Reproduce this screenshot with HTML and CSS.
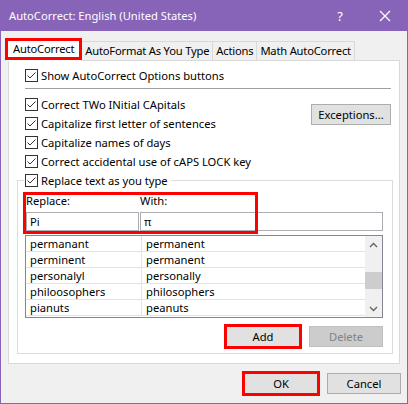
FILE: index.html
```html
<!DOCTYPE html>
<html lang="en">
<head>
    <meta charset="UTF-8">
    <title>AutoCorrect: English (United States)</title>
    <link rel="stylesheet" href="styles.css">
</head>
<body>
    <div class="window">
        <div class="titlebar">
            <span class="title">AutoCorrect: English (United States)</span>
            <span class="help">?</span>
            <span class="close">
                <svg width="12" height="12" viewBox="0 0 12 12"><path d="M1 1 L11 11 M11 1 L1 11" stroke="#fff" stroke-width="1.2" fill="none"/></svg>
            </span>
        </div>

        <div class="tabs">
            <div class="tab active">AutoCorrect<span class="mark"></span></div>
            <div class="tab">AutoFormat As You Type</div>
            <div class="tab">Actions</div>
            <div class="tab">Math AutoCorrect</div>
        </div>

        <div class="panel">
            <div class="check"><span class="box"><svg width="11" height="11" viewBox="0 0 11 11"><path d="M1.5 5.5 L4 8 L9.5 2.5" stroke="#333" stroke-width="1" fill="none"/></svg></span>Show AutoCorrect Options buttons</div>
            <div class="sep"></div>

            <div class="options">
                <div class="checks">
                    <div class="check"><span class="box"><svg width="11" height="11" viewBox="0 0 11 11"><path d="M1.5 5.5 L4 8 L9.5 2.5" stroke="#333" stroke-width="1" fill="none"/></svg></span>Correct TWo INitial CApitals</div>
                    <div class="check"><span class="box"><svg width="11" height="11" viewBox="0 0 11 11"><path d="M1.5 5.5 L4 8 L9.5 2.5" stroke="#333" stroke-width="1" fill="none"/></svg></span>Capitalize first letter of sentences</div>
                    <div class="check"><span class="box"><svg width="11" height="11" viewBox="0 0 11 11"><path d="M1.5 5.5 L4 8 L9.5 2.5" stroke="#333" stroke-width="1" fill="none"/></svg></span>Capitalize names of days</div>
                    <div class="check"><span class="box"><svg width="11" height="11" viewBox="0 0 11 11"><path d="M1.5 5.5 L4 8 L9.5 2.5" stroke="#333" stroke-width="1" fill="none"/></svg></span>Correct accidental use of cAPS LOCK key</div>
                </div>
                <button class="btn exceptions">Exceptions...</button>
            </div>

            <fieldset class="group">
                <legend><div class="check"><span class="box"><svg width="11" height="11" viewBox="0 0 11 11"><path d="M1.5 5.5 L4 8 L9.5 2.5" stroke="#333" stroke-width="1" fill="none"/></svg></span>Replace text as you type</div></legend>

                <div class="entry">
                    <div class="field replace">
                        <span class="label">Replace:</span>
                        <div class="input">Pi</div>
                    </div>
                    <div class="field with">
                        <span class="label">With:</span>
                        <div class="input">π</div>
                    </div>
                    <span class="mark"></span>
                </div>

                <div class="list">
                    <div class="rows">
                        <div class="row"><span>permanant</span><span>permanent</span></div>
                        <div class="row"><span>perminent</span><span>permanent</span></div>
                        <div class="row"><span>personalyl</span><span>personally</span></div>
                        <div class="row"><span>philoosophers</span><span>philosophers</span></div>
                        <div class="row"><span>pianuts</span><span>peanuts</span></div>
                    </div>
                    <div class="scrollbar">
                        <span class="arrow"><svg width="9" height="6" viewBox="0 0 9 6"><path d="M1 5 L4.5 1.5 L8 5" stroke="#606060" stroke-width="1.3" fill="none"/></svg></span>
                        <div class="track"><div class="thumb"></div></div>
                        <span class="arrow"><svg width="9" height="6" viewBox="0 0 9 6"><path d="M1 1 L4.5 4.5 L8 1" stroke="#606060" stroke-width="1.3" fill="none"/></svg></span>
                    </div>
                </div>

                <div class="list-actions">
                    <button class="btn focused marked">Add</button>
                    <button class="btn" disabled>Delete</button>
                </div>
            </fieldset>
        </div>

        <div class="footer">
            <button class="btn marked">OK</button>
            <button class="btn">Cancel</button>
        </div>
    </div>
</body>
</html>
```

FILE: styles.css
```css
* {
    box-sizing: border-box;
}
body {
    margin: 0;
    font-family: "Noto Sans", "Open Sans", sans-serif;
    font-size: 11.2px;
    color: #000;
    background: #fff;
}
.window {
    width: 408px;
    height: 404px;
    background: #f0f0f0;
    border: 1px solid #8764b8;
    border-top: 0;
    display: flex;
    flex-direction: column;
}

/* title bar */
.titlebar {
    height: 31px;
    margin: 0 -1px;
    padding-left: 9px;
    background: #8764b8;
    color: #fff;
    display: flex;
    align-items: center;
}
.title {
    flex: 1;
    font-size: 11.2px;
}
.help {
    width: 44px;
    text-align: center;
    font-size: 13px;
}
.close {
    width: 46px;
    display: flex;
    justify-content: center;
}

/* tabs */
.tabs {
    display: flex;
    align-items: flex-end;
    height: 21px;
    margin: 8px 0 0 5px;
    letter-spacing: -0.2px;
}
.tab {
    position: relative;
    height: 19px;
    padding: 0 3px;
    margin-left: -1px;
    border: 1px solid #d9d9d9;
    border-bottom: 0;
    background: #f0f0f0;
    line-height: 17px;
    white-space: nowrap;
}
.tab.active {
    z-index: 1;
    height: 22px;
    margin-bottom: -1px;
    padding: 0 7px;
    background: #fff;
    line-height: 18px;
}
.mark {
    position: absolute;
    border: 3px solid #f00;
    pointer-events: none;
}
.tab .mark {
    top: -2px;
    left: -1px;
    right: -1px;
    height: 22px;
}

/* panel */
.panel {
    height: 304px;
    margin: 0 7px;
    padding: 5px 8px 0 16px;
    background: #fff;
    border: 1px solid #d9d9d9;
}
.check {
    height: 19px;
    display: flex;
    align-items: center;
    gap: 3px;
    white-space: nowrap;
}
.box {
    width: 13px;
    height: 13px;
    border: 1px solid #333;
    background: #fff;
    display: flex;
    align-items: center;
    justify-content: center;
}
.sep {
    height: 1px;
    margin: 3px 0 6px;
    background: #a0a0a0;
}
.options {
    display: flex;
    justify-content: space-between;
    align-items: flex-start;
}

/* buttons */
.btn {
    width: 74px;
    height: 21px;
    padding: 0;
    font-family: inherit;
    font-size: 11.2px;
    color: #000;
    background: #e1e1e1;
    border: 1px solid #adadad;
}
.btn:disabled {
    color: #838383;
    background: #cccccc;
    border-color: #bfbfbf;
}
.btn.focused {
    border-color: #0078d7;
}
.btn.marked {
    outline: 3px solid #f00;
    outline-offset: -1px;
}
.exceptions {
    width: 80px;
    margin-top: 9px;
}

/* replace group */
.group {
    margin: 0 -2px 0 -8px;
    padding: 3px 9px 6px 8px;
    min-width: 0;
    border: 1px solid #dcdcdc;
}
.group legend {
    margin-left: -2px;
    padding: 0 3px 0 1px;
}
.entry {
    position: relative;
    display: flex;
    gap: 1px;
}
.field {
    display: flex;
    flex-direction: column;
    gap: 3px;
}
.field.replace {
    width: 113px;
}
.field.with {
    flex: 1;
}
.label {
    height: 16px;
    line-height: 16px;
}
.input {
    height: 19px;
    padding-left: 3px;
    line-height: 17px;
    border: 1px solid #abadb3;
}
.entry .mark {
    top: -1px;
    left: -3px;
    width: 235px;
    height: 42px;
}

/* replacement list */
.list {
    display: flex;
    height: 83px;
    margin: 4px 0 0 -1px;
    border: 1px solid #828790;
}
.rows {
    flex: 1;
}
.row {
    display: grid;
    grid-template-columns: 116px 1fr;
    height: 16px;
    line-height: 15px;
    border-bottom: 1px solid #e3e3e3;
}
.row span {
    padding-left: 4px;
}
.row span:first-child {
    border-right: 1px solid #e3e3e3;
}
.scrollbar {
    width: 17px;
    background: #f0f0f0;
    display: flex;
    flex-direction: column;
}
.arrow {
    height: 17px;
    display: flex;
    align-items: center;
    justify-content: center;
}
.track {
    flex: 1;
}
.thumb {
    height: 17px;
    margin-top: 19px;
    background: #cdcdcd;
}
.list-actions {
    display: flex;
    justify-content: flex-end;
    gap: 9px;
    margin-top: 8px;
}

/* dialog buttons */
.footer {
    display: flex;
    justify-content: flex-end;
    gap: 9px;
    margin-top: 9px;
    padding-right: 6px;
}
```
